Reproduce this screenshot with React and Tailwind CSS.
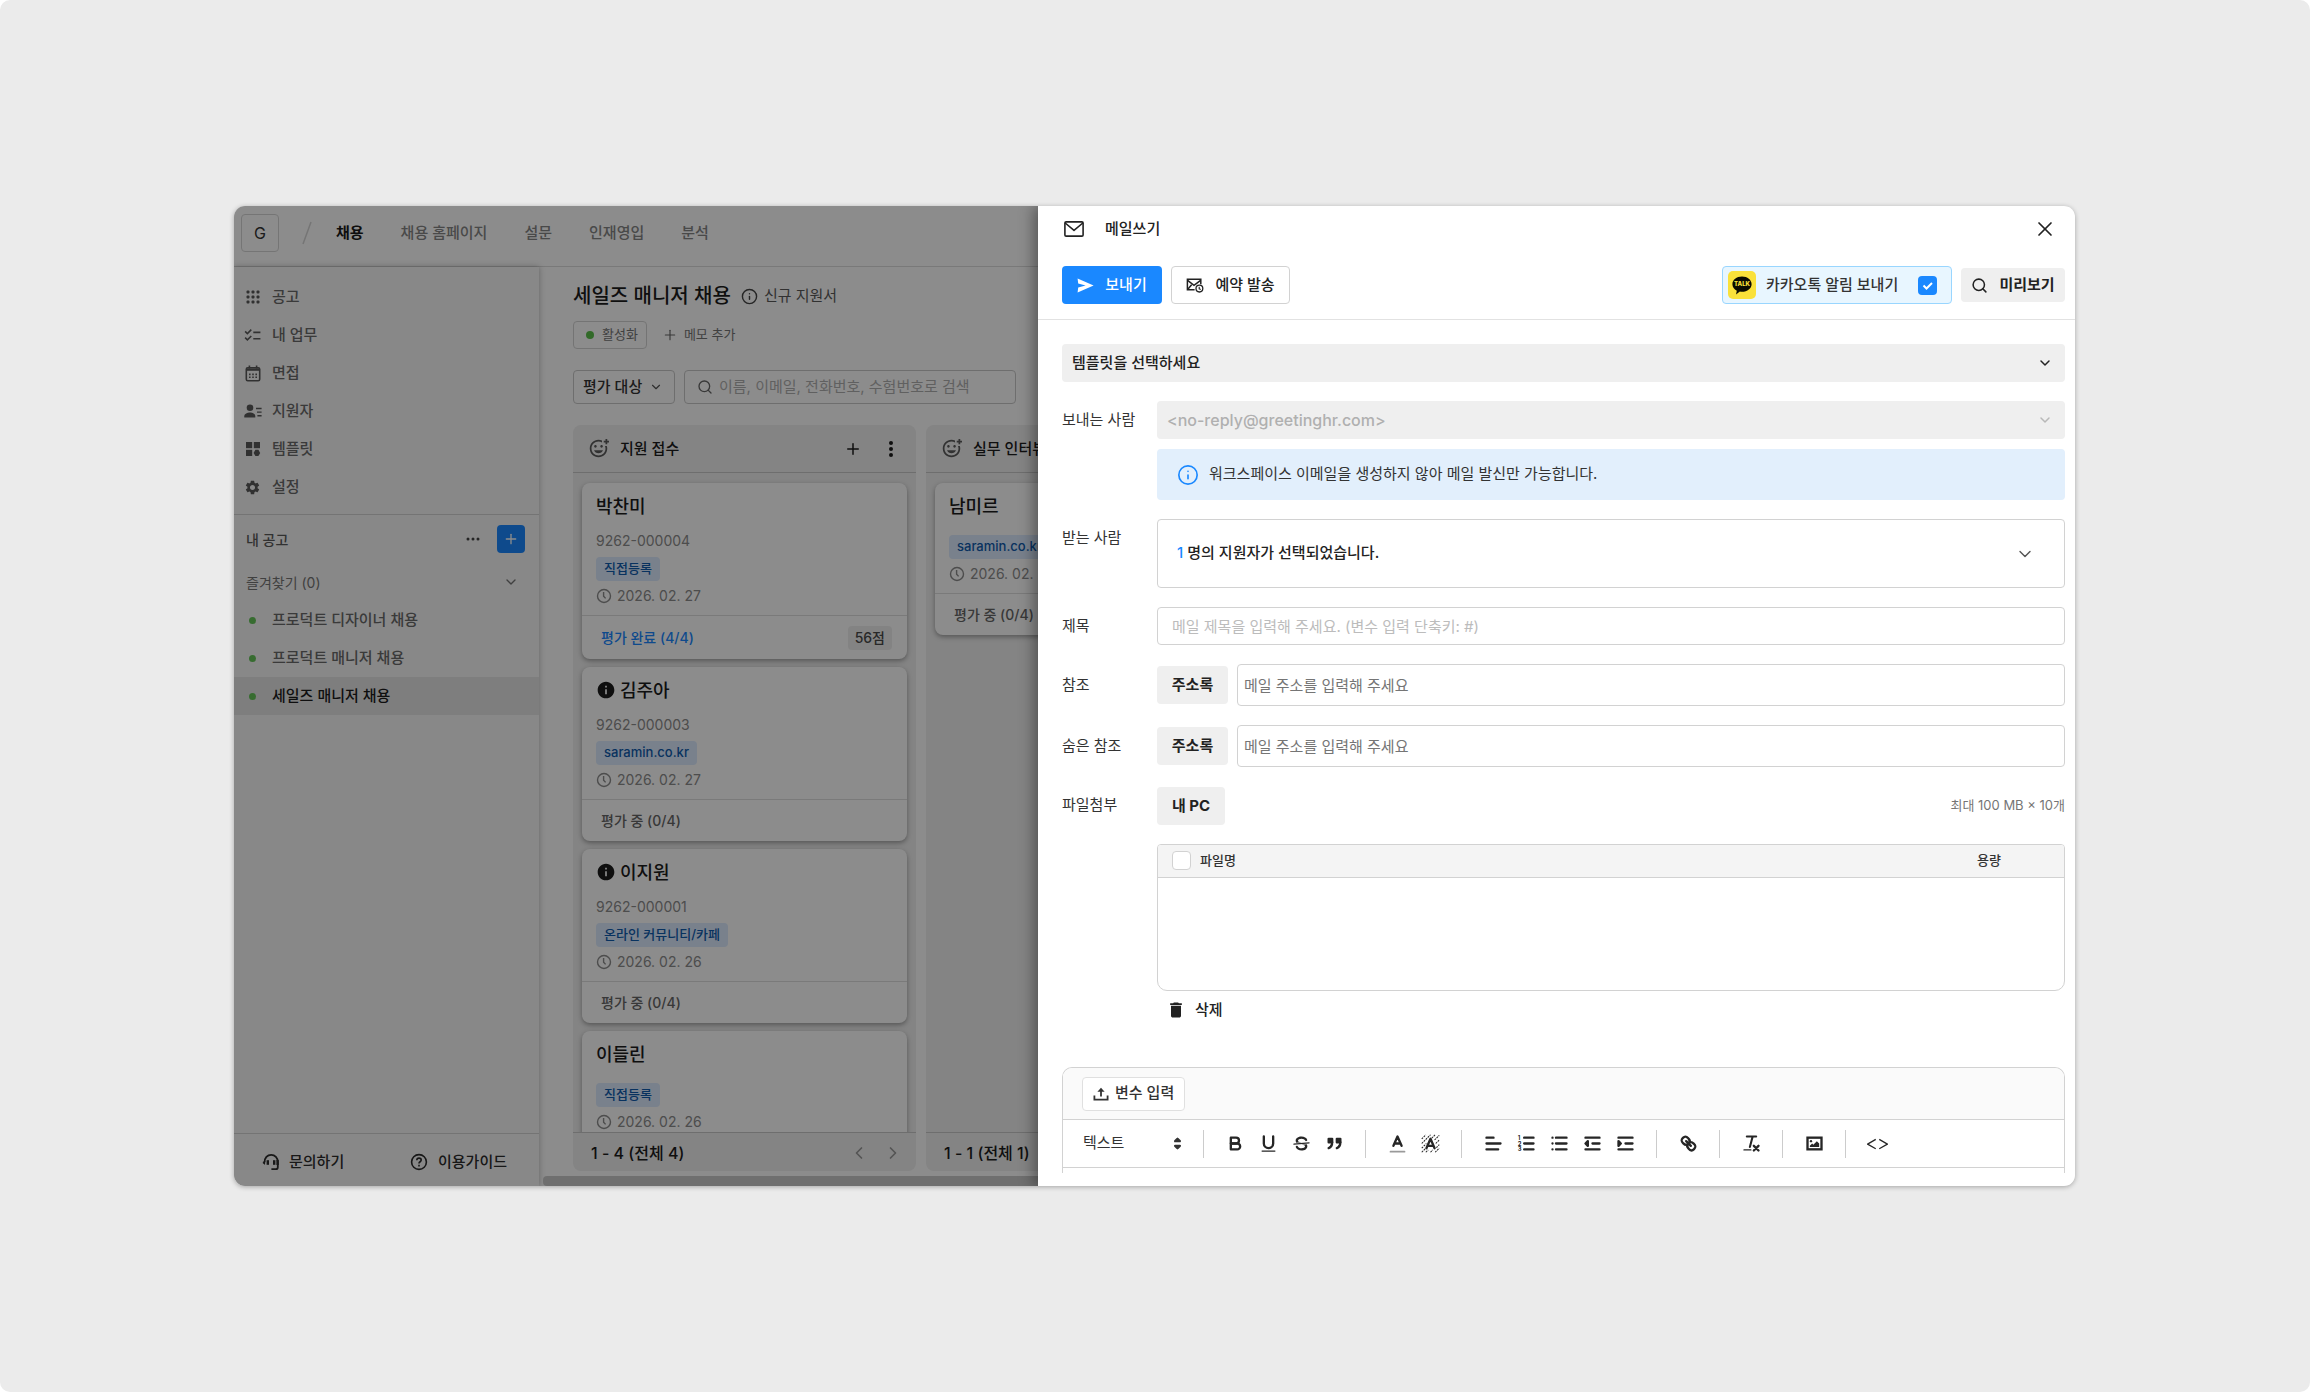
import React from 'react';
import {
  MdOutlineAddReaction,
  MdChecklist,
  MdSettings,
  MdDelete,
  MdInfo,
} from 'react-icons/md';
import { ChevronDown, ChevronLeft, ChevronRight, Search, Plus, X, Info } from 'lucide-react';

/* ---------- icons ---------- */

const DotsIcon = () => (
  <svg viewBox="0 0 14 14" className="size-3.5" fill="currentColor">
    {[2, 7, 12].map((y) => [2, 7, 12].map((x) => <rect key={`${x}-${y}`} x={x - 1.5} y={y - 1.5} width="3" height="3" rx="1" />))}
  </svg>
);

const CalendarIcon = () => (
  <svg viewBox="0 0 16 17" className="h-[17px] w-4" fill="none" stroke="currentColor" strokeWidth="1.6">
    <rect x="1.3" y="2.8" width="13.4" height="13" rx="1.5" />
    <path d="M1.3 4.600h13.4" strokeWidth="2.400" />
    <path d="M4.4 .6v3M11.6 .6v3" />
    <path d="M4 9.4h1.6M7.2 9.4h1.6M10.4 9.4H12M4 12.2h1.6M7.2 12.2h1.6M10.4 12.2H12" />
  </svg>
);

const PeopleIcon = () => (
  <svg viewBox="0 0 18 14" className="h-3.5 w-[18px]" fill="currentColor">
    <circle cx="6" cy="3.8" r="3.3" />
    <path d="M.3 13.4v-1.2c0-2.4 3.2-3.6 5.7-3.6s5.3 1.2 5.3 3.6v1.2z" />
    <path d="M12 3.8h5.6v1.4H12zM13 7.4h4.6v1.4H13zM13.4 11h4.2v1.4h-4.2z" />
  </svg>
);

const TemplateIcon = () => (
  <svg viewBox="0 0 16 16" className="size-4" fill="currentColor">
    <rect x="1" y="1" width="6.2" height="6.2" />
    <rect x="8.8" y="1" width="6.2" height="6.2" />
    <rect x="1" y="8.8" width="6.2" height="6.2" />
    <path d="M10.4 8.8h3l1.8 3.1-1.8 3.1h-3l-1.8-3.1z" />
  </svg>
);

const HeadsetIcon = () => (
  <svg viewBox="0 0 18 18" className="size-[18px] shrink-0" fill="none" stroke="currentColor" strokeWidth="1.8">
    <path d="M2.6 9.4C2.4 4.9 5.4 1.8 9.2 1.8s6.6 3 6.6 7v5.4c0 1.3-.8 2-2 2H9.4" />
    <path d="M.9 9.6l1.7-1.4v3z" fill="currentColor" strokeWidth="1" />
    <path d="M5.8 7.2v4.6" strokeWidth="2.4" />
    <path d="M12.2 7.2v4.6" strokeWidth="2.4" />
    <path d="M15.6 7v5" strokeWidth="2.4" />
  </svg>
);

const HelpIcon = () => (
  <svg viewBox="0 0 18 18" className="size-[18px] shrink-0" fill="none" stroke="currentColor" strokeWidth="1.6">
    <circle cx="9" cy="9" r="7.4" />
    <path d="M6.8 7.2c0-1.3 1-2.1 2.2-2.1s2.2.8 2.2 2c0 1.6-2.2 1.7-2.2 3.3" />
    <path d="M9 11.8v1.6" />
  </svg>
);

const ClockIcon = () => (
  <svg viewBox="0 0 16 16" className="size-4 shrink-0" fill="none" stroke="currentColor" strokeWidth="1.4">
    <circle cx="8" cy="8" r="6.5" />
    <path d="M7.6 4v4.2l2 2.2" />
  </svg>
);

const MailIcon = () => (
  <svg viewBox="0 0 20 16" className="h-4 w-5" fill="none" stroke="currentColor" strokeWidth="1.6" strokeLinejoin="round">
    <rect x=".9" y=".9" width="18.2" height="14.2" rx="1.2" />
    <path d="M1.2 2l8.8 7.4L18.8 2" />
  </svg>
);

const SendIcon = () => (
  <svg viewBox="0 0 17 15" className="h-[15px] w-[17px]" fill="currentColor">
    <path d="M.6.4 16.6 7.5.6 14.6 1.2 9.4 8.6 7.5 1.2 5.6z" />
  </svg>
);

const MailClockIcon = () => (
  <svg viewBox="0 0 18 15" className="h-[15px] w-[18px]" fill="none" stroke="currentColor" strokeWidth="1.5">
    <path d="M8.6 11.8H1.4V1.2h13.4v5" />
    <path d="M1.6 2.4 8 7.4l6.6-5M1.6 11.6l4-4.8" />
    <circle cx="13.4" cy="10.6" r="3.4" strokeWidth="1.3" />
    <path d="M13.2 8.8v2l1.5.6" strokeWidth="1.1" />
  </svg>
);

const KakaoIcon = () => (
  <svg viewBox="0 0 28 28" className="size-7" aria-hidden="true">
    <rect width="28" height="28" rx="5" fill="#fae13a" />
    <path d="M14 5.6c5.4 0 9.6 3.4 9.6 7.6s-4.200 7.600-9.600 7.600c-.7 0-1.400-.1-2.100-.2L8 23.400l.8-3.700c-2.600-1.300-4.400-3.700-4.400-6.500 0-4.200 4.200-7.600 9.600-7.600z" fill="#0b0b00" />
    <text x="14" y="15.400" textAnchor="middle" fontSize="6" fontWeight="800" fontFamily="Inter, sans-serif" fill="#fae13a">TALK</text>
  </svg>
);

const VariableIcon = () => (
  <svg viewBox="0 0 16 14" className="h-3.5 w-4" fill="none" stroke="currentColor" strokeWidth="1.8">
    <path d="M1.400 8.400v4.200h13.200V8.400" />
    <path d="M8 9.400V3" />
    <path d="M4.400 4.800h7.200L8 .800z" fill="currentColor" stroke="none" />
  </svg>
);

/* ---------- editor toolbar glyphs, 18 unit grid ---------- */

const Glyph = ({ children }) => (
  <svg viewBox="0 0 18 18" className="size-[21px]" fill="none" stroke="currentColor" strokeWidth="2" strokeLinecap="round" strokeLinejoin="round">
    {children}
  </svg>
);

const glyphs = {
  굵게: (
    <>
      <path d="M5,4H9.5A2.5,2.5,0,0,1,12,6.500v0A2.5,2.5,0,0,1,9.500,9H5V4Z" />
      <path d="M5,9h5.500A2.500,2.500,0,0,1,13,11.500v0A2.500,2.500,0,0,1,10.500,14H5V9Z" />
    </>
  ),
  밑줄: (
    <>
      <path d="M5,3V9a4.012,4.012,0,0,0,4,4H9a4.012,4.012,0,0,0,4-4V3" />
      <rect fill="currentColor" stroke="none" height="1" rx="0.5" width="12" x="3" y="15" />
    </>
  ),
  취소선: (
    <>
      <path strokeWidth="1" d="M15.500 8.500 2.500 9.500" />
      <path fill="currentColor" stroke="none" d="M9.007,8C6.542,7.791,6,7.519,6,6.5,6,5.792,7.283,5,9,5c1.571,0,2.765.679,2.969,1.309a1,1,0,0,0,1.9-.617C13.356,4.106,11.354,3,9,3,6.2,3,4,4.538,4,6.5a3.2,3.2,0,0,0,.5,1.843Z" />
      <path fill="currentColor" stroke="none" d="M8.984,10C11.457,10.208,12,10.479,12,11.5c0,0.708-1.283,1.5-3,1.5-1.571,0-2.765-.679-2.969-1.309a1,1,0,1,0-1.9.617C4.644,13.894,6.646,15,9,15c2.8,0,5-1.538,5-3.5a3.2,3.2,0,0,0-.5-1.843Z" />
    </>
  ),
  인용: (
    <g fill="currentColor">
      <rect height="3" width="3" x="4" y="5" />
      <rect height="3" width="3" x="11" y="5" />
      <path d="M7,8c0,4.031-3,5-3,5" />
      <path d="M14,8c0,4.031-3,5-3,5" />
    </g>
  ),
  '글자 색': (
    <>
      <path d="M3 16h12" stroke="#9a9a9a" strokeWidth="1.500" />
      <path d="M5.500 11 9 3l3.500 8M11.600 9H6.400" />
    </>
  ),
  '배경 색': (
    <>
      <path strokeWidth="0.900" strokeLinecap="butt" strokeDasharray="1.600 0.800" d="M1.500 5l3.500-3.500M1.500 9 9 1.500M1.500 13l4-4M10 4.500l3-3M1.500 16.500l3-3M12.500 6l4-4M13.500 9l3-3M14 12.500l2.500-2.500M5 16.500l2-2M9 16.500l2-2M13 16.500l3.500-3.500" />
      <path d="M5.500 13 9 5l3.500 8M11.600 11H6.400" />
    </>
  ),
  정렬: <path d="M3 9h12M3 14h10M3 4h6" />,
  '번호 목록': (
    <>
      <path d="M7 4h8M7 9h8M7 14h8" />
      <g stroke="none" fill="currentColor" fontSize="5" fontFamily="Inter, sans-serif" fontWeight="700">
        <text x="1.500" y="5.800">1</text>
        <text x="1.500" y="10.800">2</text>
        <text x="1.500" y="15.800">3</text>
      </g>
    </>
  ),
  '글머리 목록': <path d="M6 4h9M6 9h9M6 14h9M3 4h.01M3 9h.01M3 14h.01" />,
  내어쓰기: (
    <>
      <path d="M3 14h12M3 4h12M9 9h6" />
      <path fill="currentColor" d="M5 7v4L3 9z" />
    </>
  ),
  들여쓰기: (
    <>
      <path d="M3 14h12M3 4h12M9 9h6" />
      <path fill="currentColor" d="M3 7v4l2-2z" />
    </>
  ),
  링크: (
    <>
      <path d="M7 7l4 4" />
      <path d="M8.9,4.577a3.476,3.476,0,0,1,.36,4.679A3.476,3.476,0,0,1,4.577,8.9C3.185,7.5,2.035,6.4,4.217,4.217S7.5,3.185,8.9,4.577Z" />
      <path d="M13.423,9.1a3.476,3.476,0,0,0-4.679-.36,3.476,3.476,0,0,0,.36,4.679c1.392,1.392,2.5,2.542,4.679.36S14.815,10.5,13.423,9.1Z" />
    </>
  ),
  '서식 지우기': (
    <>
      <path d="M5 3h8M7.600 12 10 3" strokeWidth="1.800" />
      <path d="M11 11l4 4M15 11l-4 4" />
      <rect fill="currentColor" stroke="none" height="1" rx="0.500" width="7" x="2" y="14" />
    </>
  ),
  이미지: (
    <>
      <rect height="10" width="12" x="3" y="4" strokeLinejoin="miter" />
      <circle fill="currentColor" stroke="none" cx="6" cy="7" r="1" />
      <path fill="currentColor" stroke="none" d="M5 12v-1l2-2 1 1 3-3 2 2v3z" />
    </>
  ),
  코드: <path d="M7.500 5.500 .500 9.500l7 4M10.500 5.500l7 4-7 4" strokeWidth="1.100" strokeLinecap="butt" />,
};

const toolGroups = [
  ['굵게', '밑줄', '취소선', '인용'],
  ['글자 색', '배경 색'],
  ['정렬', '번호 목록', '글머리 목록', '내어쓰기', '들여쓰기'],
  ['링크'],
  ['서식 지우기'],
  ['이미지'],
  ['코드'],
];

/* ---------- recruiting board ---------- */

const nav = ['채용', '채용 홈페이지', '설문', '인재영입', '분석'];

const menu = [
  ['공고', <DotsIcon />],
  ['내 업무', <MdChecklist className="size-[19px]" />],
  ['면접', <CalendarIcon />],
  ['지원자', <PeopleIcon />],
  ['템플릿', <TemplateIcon />],
  ['설정', <MdSettings className="size-[17px]" />],
];

const postings = ['프로덕트 디자이너 채용', '프로덕트 매니저 채용', '세일즈 매니저 채용'];

const columns = [
  {
    title: '지원 접수',
    range: '1 - 4 (전체 4)',
    cards: [
      { name: '박찬미', no: '9262-000004', tag: '직접등록', date: '2026. 02. 27', done: true, status: '평가 완료 (4/4)', score: '56점' },
      { name: '김주아', info: true, no: '9262-000003', tag: 'saramin.co.kr', date: '2026. 02. 27', status: '평가 중 (0/4)' },
      { name: '이지원', info: true, no: '9262-000001', tag: '온라인 커뮤니티/카페', date: '2026. 02. 26', status: '평가 중 (0/4)' },
      { name: '이들린', tag: '직접등록', date: '2026. 02. 26' },
    ],
  },
  {
    title: '실무 인터뷰',
    range: '1 - 1 (전체 1)',
    cards: [{ name: '남미르', tag: 'saramin.co.kr', date: '2026. 02. 27', status: '평가 중 (0/4)' }],
  },
];

function Card({ name, info, no, tag, date, status, done, score }) {
  return (
    <article className="shrink-0 rounded-lg bg-white shadow-[0_2px_5px_rgba(0,0,0,0.35)]">
      <div className="flex flex-col items-start px-3.5 pt-[11px] pb-2.5">
        <h3 className="flex h-6 items-center gap-1 text-[18px] font-medium text-[#1c1c1c]">
          {info && <MdInfo className="size-5" />}
          {name}
        </h3>
        <div className="mt-[17px] flex flex-col items-start">
          {no && <span className="-mt-1 mb-1.5 h-5 text-[14px] leading-5 text-[#8c8c8c]">{no}</span>}
          <span className="flex h-6 items-center rounded bg-[#dcebff] px-2 text-[13px] font-medium text-[#0f5cad]">{tag}</span>
          <span className="mt-[5px] flex h-[19px] items-center gap-[5px] text-[14px] text-[#8c8c8c]">
            <ClockIcon />
            {date}
          </span>
        </div>
      </div>
      {status && (
        <div className={`flex items-center justify-between border-t border-[#dedede] pr-[15px] pl-[19px] text-[14px] font-medium ${done ? 'h-11 text-[#1a88ff]' : 'h-[42px] text-[#666]'}`}>
          {status}
          {score && <span className="flex h-6 items-center rounded bg-[#efefef] px-[7px] text-[#4a4a4a]">{score}</span>}
        </div>
      )}
    </article>
  );
}

function Column({ title, range, cards }) {
  return (
    <section className="flex w-[343px] shrink-0 flex-col overflow-hidden rounded-lg bg-[#f0f0f0] text-[#1c1c1c]">
      <header className="flex h-12 shrink-0 items-center border-b border-[#c8c8c8] pr-[15px] pl-[15px]">
        <MdOutlineAddReaction className="size-[21px] text-[#5c5c5c]" />
        <h2 className="ml-[11px] flex-1 pt-0.5 text-[15px] font-medium whitespace-nowrap">{title}</h2>
        <button type="button" aria-label="지원자 추가" className="mr-[19px]">
          <Plus className="size-[18px]" strokeWidth={2} />
        </button>
        <button type="button" aria-label="더보기" className="flex w-5 justify-center">
          <svg viewBox="0 0 4 16" className="h-4 w-1" fill="currentColor">
            <circle cx="2" cy="2" r="2" />
            <circle cx="2" cy="8" r="2" />
            <circle cx="2" cy="14" r="2" />
          </svg>
        </button>
      </header>
      <div className="flex min-h-0 flex-1 flex-col gap-2 overflow-hidden px-[9px] pt-2.5">
        {cards.map((c) => (
          <Card key={c.name} {...c} />
        ))}
      </div>
      <footer className="flex h-[39px] shrink-0 items-center border-t border-[#c8c8c8] pt-0.5 pr-[13px] pl-[18px] text-[16px] font-medium">
        <span className="flex-1">{range}</span>
        <button type="button" aria-label="이전" className="mr-3.5 text-[#999]">
          <ChevronLeft className="size-5" />
        </button>
        <button type="button" aria-label="다음" className="text-[#999]">
          <ChevronRight className="size-5" />
        </button>
      </footer>
    </section>
  );
}

function Sidebar() {
  return (
    <aside className="flex w-[305px] shrink-0 flex-col bg-[#f8f8f8] shadow-[0_0_6px_rgba(0,0,0,0.3)]">
      <nav className="border-b border-[#d4d4d4] pt-[11px] pb-2">
        {menu.map(([label, icon]) => (
          <a key={label} href="#" className="flex h-[38px] items-center pl-[9px] text-[15px] font-medium text-[#6a6a6a]">
            <span className="mr-2.5 flex w-[19px] justify-center text-[#5a5a5a]">{icon}</span>
            {label}
          </a>
        ))}
      </nav>
      <div className="flex h-12 items-center pr-3.5 pl-3">
        <h2 className="flex-1 text-[14px] font-medium text-[#5a5a5a]">내 공고</h2>
        <button type="button" aria-label="더보기" className="mr-[17px] text-[#444]">
          <svg viewBox="0 0 14 4" className="h-1 w-3.5" fill="currentColor">
            <circle cx="2" cy="2" r="1.500" />
            <circle cx="7" cy="2" r="1.500" />
            <circle cx="12" cy="2" r="1.500" />
          </svg>
        </button>
        <button type="button" aria-label="공고 추가" className="flex size-7 items-center justify-center rounded bg-[#1a88ff] text-white">
          <Plus className="size-4" strokeWidth={2} />
        </button>
      </div>
      <div className="flex h-[38px] items-center justify-between pr-5 pl-3 text-[14px] text-[#757575]">
        <span>즐겨찾기 (0)</span>
        <ChevronDown className="size-4" />
      </div>
      <div className="flex-1">
        {postings.map((p, i) => (
          <a
            key={p}
            href="#"
            className={`flex h-[38px] items-center pl-[15px] text-[15px] font-medium ${i === 2 ? 'bg-[#e6e6e6] text-[#1c1c1c]' : 'text-[#6a6a6a]'}`}
          >
            <span className="mr-4 size-[7px] rounded-full bg-[#64c558]" />
            {p}
          </a>
        ))}
      </div>
      <footer className="flex h-[53px] items-center justify-between border-t border-[#d4d4d4] pt-1 pr-8 pl-7 text-[15px] font-medium text-[#2c2c2c]">
        <a href="#" className="flex items-center gap-[9px]">
          <HeadsetIcon />
          문의하기
        </a>
        <a href="#" className="flex items-center gap-2.5">
          <HelpIcon />
          이용가이드
        </a>
      </footer>
    </aside>
  );
}

function Board() {
  return (
    <div className="relative flex min-h-0 min-w-0 flex-col overflow-hidden bg-white">
      <header className="flex h-[61px] shrink-0 items-center border-b border-[#dcdcdc] pb-1.5 pl-[7px] text-[15px] whitespace-nowrap text-[#868686]">
        <button type="button" className="flex size-[38px] shrink-0 items-center justify-center rounded border border-[#d6d6d6] text-[16px] text-[#333]">G</button>
        <svg viewBox="0 0 10 24" className="ml-[23px] h-6 w-2.5 shrink-0" stroke="#d6d6d6" strokeWidth="1.500">
          <path d="M1 23 9 1" />
        </svg>
        <nav className="ml-6 flex gap-[37px]">
          {nav.map((n, i) => (
            <a key={n} href="#" className={i === 0 ? 'font-bold text-[#1a1a1a]' : 'font-medium'}>
              {n}
            </a>
          ))}
        </nav>
      </header>
      <div className="flex min-h-0 flex-1">
        <Sidebar />
        <main className="flex min-w-0 flex-1 flex-col overflow-hidden">
          <div className="flex shrink-0 items-center pt-3.5 pl-[34px]">
            <h1 className="h-[30px] text-[20px] leading-[30px] font-medium whitespace-nowrap text-[#1c1c1c]">세일즈 매니저 채용</h1>
            <Info className="mr-1.5 ml-2.5 size-[17px] text-[#444]" />
            <span className="text-[15px] text-[#5a5a5a]">신규 지원서</span>
          </div>
          <div className="mt-2.5 flex h-7 shrink-0 items-center pl-[34px] text-[13px] text-[#757575]">
            <span className="mr-[15px] flex h-7 items-center rounded border border-[#d4d4d4] px-2">
              <span className="mr-2 ml-1 size-2 rounded-full bg-[#5cc24c]" />
              활성화
            </span>
            <button type="button" className="flex items-center gap-1.5">
              <Plus className="size-4 text-[#666]" strokeWidth={1.700} />
              메모 추가
            </button>
          </div>
          <div className="mt-[21px] flex shrink-0 gap-[9px] pl-[34px]">
            <label className="relative flex w-[102px] items-center text-[#333]">
              <select aria-label="평가 대상" className="h-[34px] w-full appearance-none rounded border border-[#c8c8c8] pl-[9px] text-[15px] font-medium text-[#333]">
                <option>평가 대상</option>
              </select>
              <ChevronDown className="pointer-events-none absolute right-3 size-3.5 text-[#555]" />
            </label>
            <label className="flex h-[34px] w-[332px] items-center rounded border border-[#c8c8c8] px-3">
              <Search className="mr-1.5 size-4 text-[#666]" />
              <input type="text" aria-label="지원자 검색" placeholder="이름, 이메일, 전화번호, 수험번호로 검색" className="min-w-0 flex-1 text-[15px] outline-none placeholder:text-[#b0b0b0]" />
            </label>
          </div>
          <div className="mt-[21px] flex min-h-0 flex-1 gap-2.5 overflow-hidden pl-[34px]">
            {columns.map((c) => (
              <Column key={c.title} {...c} />
            ))}
          </div>
          <div className="mt-[5px] h-2.5 shrink-0 pl-1">
            <div className="h-full rounded-l bg-[#cbcbcb]" />
          </div>
        </main>
      </div>
      <div className="absolute inset-0 bg-black/45" />
    </div>
  );
}

/* ---------- mail panel ---------- */

const field = 'rounded border border-[#d2d2d2] bg-white';

function Row({ label, htmlFor, children, top }) {
  return (
    <div className={`flex ${top ? 'items-start' : 'items-center'}`}>
      <label htmlFor={htmlFor} className={`w-[95px] shrink-0 text-[15px] text-[#333] ${top ? 'flex h-[38px] items-center' : ''}`}>
        {label}
      </label>
      {children}
    </div>
  );
}

function AddressRow({ label, id }) {
  return (
    <Row label={label} htmlFor={id}>
      <button type="button" className="mr-[9px] h-[38px] w-[71px] rounded bg-[#efefef] text-[15px] font-bold text-[#222]">주소록</button>
      <input id={id} type="text" placeholder="메일 주소를 입력해 주세요" className={`h-[42px] min-w-0 flex-1 px-1.5 text-[15px] outline-none placeholder:text-[#757575] ${field}`} />
    </Row>
  );
}

function Toolbar() {
  return (
    <div className="flex h-12 items-center border-b border-[#d2d2d2] pl-5 text-[#262626]">
      <button type="button" className="flex h-7 w-[121px] items-center justify-between border-r border-[#ccc] pr-[15px] text-[15px] text-[#333]">
        텍스트
        <svg viewBox="0 0 18 18" className="size-[21px]" fill="currentColor" stroke="currentColor" strokeWidth="2" strokeLinejoin="round">
          <path d="M7 11l2 2 2-2zM7 7l2-2 2 2z" />
        </svg>
      </button>
      {toolGroups.map((group, i) => (
        <div key={group[0]} className={`flex h-7 items-center pr-3.5 pl-[15px] ${i < toolGroups.length - 1 ? 'border-r border-[#ccc]' : ''}`}>
          {group.map((g) => (
            <button key={g} type="button" aria-label={g} className="flex w-[33px] justify-center">
              <Glyph>{glyphs[g]}</Glyph>
            </button>
          ))}
        </div>
      ))}
    </div>
  );
}

function MailPanel() {
  return (
    <div className="relative flex min-w-0 flex-col bg-white shadow-[-4px_0_14px_rgba(0,0,0,0.4)]">
      <header className="flex h-[45px] shrink-0 items-center pr-[18px] pl-[26px] text-[#222]">
        <MailIcon />
        <h2 className="ml-[21px] flex-1 pt-0.5 text-[15px] font-medium">메일쓰기</h2>
        <button type="button" aria-label="닫기">
          <X className="size-6" strokeWidth={1.700} />
        </button>
      </header>
      <div className="flex h-[69px] shrink-0 items-center border-b border-[#e2e2e2] pr-2.5 pl-6 text-[15px] font-medium text-[#222]">
        <button type="button" className="flex h-[38px] w-[100px] items-center justify-center gap-[11px] rounded bg-[#1a88ff] text-white">
          <SendIcon />
          보내기
        </button>
        <button type="button" className={`ml-[9px] flex h-[38px] w-[119px] items-center justify-center gap-[11px] ${field}`}>
          <MailClockIcon />
          예약 발송
        </button>
        <label className="ml-auto flex h-[38px] w-[230px] items-center rounded border border-[#99d6ff] bg-[#e8f6ff] pr-3.5 pl-[5px] text-[#333]">
          <KakaoIcon />
          <span className="ml-2.5 flex-1">카카오톡 알림 보내기</span>
          <span className="grid">
            <input type="checkbox" defaultChecked className="size-[19px] appearance-none rounded bg-[#1a88ff] [grid-area:1/1]" />
            <svg viewBox="0 0 19 19" className="pointer-events-none size-[19px] [grid-area:1/1]" fill="none" stroke="#fff" strokeWidth="2">
              <path d="M5.500 9.500l3 3 5.500-5.500" />
            </svg>
          </span>
        </label>
        <button type="button" className="ml-[9px] flex h-[34px] w-[104px] items-center justify-center gap-[11px] rounded bg-[#efefef] font-bold">
          <Search className="size-[17px]" strokeWidth={2.200} />
          미리보기
        </button>
      </div>

      <form className="flex min-h-0 flex-1 flex-col gap-[19px] overflow-hidden pt-6 pr-2.5 pl-6" onSubmit={(e) => e.preventDefault()}>
        <div className="relative flex items-center">
          <select aria-label="템플릿" className="h-[38px] w-full appearance-none rounded bg-[#efefef] pl-2.5 text-[15px] font-medium text-[#222]">
            <option>템플릿을 선택하세요</option>
          </select>
          <ChevronDown className="pointer-events-none absolute right-3 size-4 text-[#222]" strokeWidth={2.200} />
        </div>

        <Row label="보내는 사람" htmlFor="sender" top>
          <div className="flex min-w-0 flex-1 flex-col gap-2.5">
            <div className="relative flex items-center">
              <select id="sender" disabled className="h-[38px] w-full appearance-none rounded bg-[#efefef] pl-2.5 text-[16px] font-medium text-[#b0b0b0] opacity-100">
                <option>&lt;no-reply@greetinghr.com&gt;</option>
              </select>
              <ChevronDown className="pointer-events-none absolute right-3 size-4 text-[#b8b8b8]" strokeWidth={2.200} />
            </div>
            <p className="flex h-[51px] items-center gap-2.5 rounded bg-[#e2effc] px-5 text-[15px] text-[#333]">
              <Info className="size-[22px] text-[#1a88ff]" strokeWidth={1.800} />
              워크스페이스 이메일을 생성하지 않아 메일 발신만 가능합니다.
            </p>
          </div>
        </Row>

        <Row label="받는 사람" htmlFor="receiver" top>
          <button id="receiver" type="button" className={`flex h-[69px] min-w-0 flex-1 items-center justify-between pr-[29px] pl-[19px] text-[15px] font-medium text-[#222] ${field}`}>
            <span>
              <span className="text-[#1a88ff]">1</span> 명의 지원자가 선택되었습니다.
            </span>
            <ChevronDown className="size-5 text-[#555]" strokeWidth={1.700} />
          </button>
        </Row>

        <Row label="제목" htmlFor="subject">
          <input id="subject" type="text" placeholder="메일 제목을 입력해 주세요. (변수 입력 단축키: #)" className={`h-[38px] min-w-0 flex-1 px-3.5 text-[15px] outline-none placeholder:text-[#bcbcbc] ${field}`} />
        </Row>
        <AddressRow label="참조" id="cc" />
        <AddressRow label="숨은 참조" id="bcc" />
        <Row label="파일첨부" htmlFor="file">
          <button id="file" type="button" className="mt-px h-[38px] w-[68px] rounded bg-[#efefef] text-[15px] font-bold text-[#222]">내 PC</button>
          <span className="ml-auto text-[13px] text-[#757575]">최대 100 MB × 10개</span>
        </Row>

        <div className="ml-[95px]">
          <div className="h-[147px] overflow-hidden rounded-t rounded-b-[10px] border border-[#d2d2d2]">
            <table className="w-full text-left text-[13px] text-[#333]">
              <thead>
                <tr className="h-8 border-b border-[#d2d2d2] bg-[#f4f4f4]">
                  <th className="py-0 pl-3.5 font-medium">
                    <label className="flex items-center gap-[9px]">
                      <input type="checkbox" className="size-[19px] appearance-none rounded border border-[#d2d2d2] bg-white" />
                      파일명
                    </label>
                  </th>
                  <th className="w-[87px] py-0 font-medium">용량</th>
                </tr>
              </thead>
            </table>
          </div>
          <button type="button" className="flex h-[38px] items-center gap-[9px] px-[9px] text-[15px] font-medium text-[#222]">
            <MdDelete className="size-5" />
            삭제
          </button>
        </div>

        <div className="mt-[19px] mb-[13px] min-h-0 flex-1 overflow-hidden rounded-t-[10px] border border-b-0 border-[#d2d2d2]">
          <div className="flex h-[52px] items-center border-b border-[#d2d2d2] bg-[#fafafa] pl-[19px]">
            <button type="button" className="flex h-[34px] items-center gap-1.5 rounded border border-[#e0e0e0] bg-white px-2.5 text-[15px] font-medium text-[#333]">
              <VariableIcon />
              변수 입력
            </button>
          </div>
          <Toolbar />
        </div>
      </form>
    </div>
  );
}

export default function App() {
  return (
    <div className="flex h-screen rounded-[10px] bg-[#ebebeb] py-[206px] pr-[235px] pl-[234px] font-['Inter','Noto_Sans_CJK_KR',sans-serif]">
      <div className="grid min-h-0 flex-1 grid-cols-[804fr_1037fr] grid-rows-[minmax(0,1fr)] overflow-hidden rounded-[11px] shadow-[0_1px_5px_rgba(0,0,0,0.3)]">
        <Board />
        <MailPanel />
      </div>
    </div>
  );
}
